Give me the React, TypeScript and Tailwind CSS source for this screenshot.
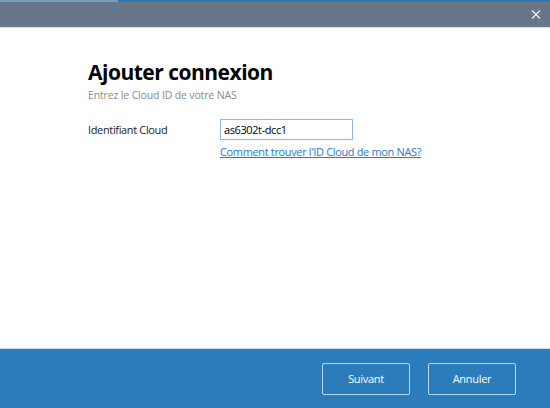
export default function App() {
  return (
    <div className="flex h-[408px] w-[550px] flex-col overflow-hidden bg-white font-['Open_Sans','Noto_Sans',sans-serif]">
      {/* progress strip */}
      <div className="flex h-[2px] w-full">
        <div className="w-[118px] bg-[#7d9cb6]" />
        <div className="flex-1 bg-[#2a78b6]" />
      </div>

      {/* title bar */}
      <div className="flex h-[26px] items-center justify-end border-b border-[#d5dbe3] bg-[#687689] pr-[6px]">
        <button className="flex h-[16px] w-[16px] items-center justify-center text-white/90">
          <svg width="10" height="9" viewBox="0 0 10 9" fill="none" stroke="currentColor" strokeWidth="1.2">
            <path d="M1 0.5L9 8.5M9 0.5L1 8.5" />
          </svg>
        </button>
      </div>

      {/* content */}
      <div className="flex-1 pl-[88px] pt-[30px]">
        <h1 className="text-[21px] font-bold leading-[28px] tracking-[-0.5px] text-black">Ajouter connexion</h1>
        <p className="mt-[2px] text-[10.5px] leading-[14px] tracking-[-0.15px] text-[#8a8a8a]">
          Entrez le Cloud ID de votre NAS
        </p>

        <div className="mt-[17px] flex items-center">
          <span className="w-[132px] pt-[1px] text-[11px] tracking-[-0.35px] text-[#222]">Identifiant Cloud</span>
          <input
            className="h-[21px] w-[133px] border border-[#8dbbe8] px-[3px] text-[11px] tracking-[-0.4px] text-black outline-none"
            defaultValue="as6302t-dcc1"
          />
        </div>
        <a href="#" className="ml-[132px] mt-[4px] block text-[11px] tracking-[-0.35px] text-[#2a7ac6] underline">
          Comment trouver l'ID Cloud de mon NAS?
        </a>
      </div>

      {/* footer */}
      <div className="flex h-[60px] items-start justify-end gap-[18px] border-t border-[#c9ddef] bg-[#2a7dba] pr-[34px] pt-[14px]">
        <button className="h-[32px] w-[88px] rounded-[2px] border border-white/70 text-[11px] tracking-[-0.3px] text-white">
          Suivant
        </button>
        <button className="h-[32px] w-[88px] rounded-[2px] border border-white/70 text-[11px] tracking-[-0.3px] text-white">
          Annuler
        </button>
      </div>
    </div>
  );
}
